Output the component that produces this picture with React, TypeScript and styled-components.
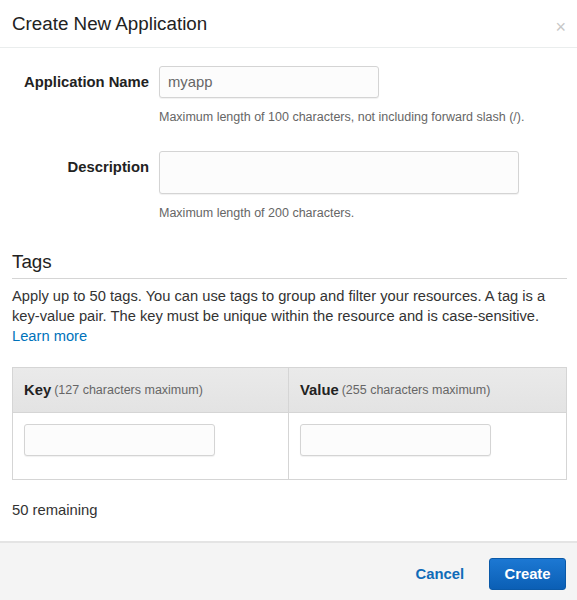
import React from 'react';
import styled, { createGlobalStyle } from 'styled-components';

const GlobalStyle = createGlobalStyle`
    html, body {
        margin: 0;
        padding: 0;
        background: #fff;
    }
    body {
        font-family: 'Liberation Sans', Arial, sans-serif;
        color: #333;
    }
`;

const App: React.FC = () => {
    return (
        <>
            <GlobalStyle />
            <Modal>
                <Header>
                    <Title>Create New Application</Title>
                    <Close aria-label="close">×</Close>
                </Header>
                <Body>
                    <FieldRow>
                        <Label>Application Name</Label>
                        <FieldControl>
                            <TextInput defaultValue="myapp" width={220} />
                            <Hint>
                                Maximum length of 100 characters, not including forward slash (/).
                            </Hint>
                        </FieldControl>
                    </FieldRow>
                    <FieldRow $top={27}>
                        <Label>Description</Label>
                        <FieldControl>
                            <TextArea />
                            <Hint>Maximum length of 200 characters.</Hint>
                        </FieldControl>
                    </FieldRow>

                    <SectionTitle>Tags</SectionTitle>
                    <Paragraph>
                        Apply up to 50 tags. You can use tags to group and filter your resources. A
                        tag is a key-value pair. The key must be unique within the resource and is
                        case-sensitive.
                        <br />
                        <Link href="#">Learn more</Link>
                    </Paragraph>

                    <TagTable>
                        <HeadCell>
                            <strong>Key</strong> <Small>(127 characters maximum)</Small>
                        </HeadCell>
                        <HeadCell $last>
                            <strong>Value</strong> <Small>(255 characters maximum)</Small>
                        </HeadCell>
                        <BodyCell>
                            <TextInput width={191} />
                        </BodyCell>
                        <BodyCell $last>
                            <TextInput width={191} />
                        </BodyCell>
                    </TagTable>

                    <Remaining>50 remaining</Remaining>
                </Body>
                <Footer>
                    <CancelButton>Cancel</CancelButton>
                    <PrimaryButton>Create</PrimaryButton>
                </Footer>
            </Modal>
        </>
    );
};

const Modal = styled.div`
    width: 577px;
    height: 600px;
    display: flex;
    flex-direction: column;
    background: #fff;
    overflow: hidden;
`;

const Header = styled.div`
    height: 48px;
    display: flex;
    align-items: center;
    justify-content: space-between;
    padding: 0 12px;
    border-bottom: 1px solid #eaeded;
    box-sizing: border-box;
`;

const Title = styled.h2`
    margin: 0;
    font-size: 18.8px;
    font-weight: normal;
    color: #222;
    padding-top: 1px;
`;

const Close = styled.span`
    font-size: 18px;
    color: #c7c7c7;
    margin-top: 7px;
    margin-right: -1px;
`;

const Body = styled.div`
    flex: 1;
    padding: 18px 10px 0 12px;
`;

const FieldRow = styled.div<{ $top?: number }>`
    display: grid;
    grid-template-columns: 137px 1fr;
    column-gap: 10px;
    margin-top: ${p => p.$top || 0}px;
`;

const Label = styled.label`
    font-size: 14.8px;
    font-weight: bold;
    text-align: right;
    color: #222;
    padding-top: 8px;
`;

const FieldControl = styled.div`
    display: flex;
    flex-direction: column;
`;

const TextInput = styled.input<{ width: number }>`
    width: ${p => p.width}px;
    height: 32px;
    box-sizing: border-box;
    border: 1px solid #d4d4d4;
    border-radius: 3px;
    background: #fcfcfc;
    box-shadow: 0 1px 1px rgba(0, 0, 0, 0.06);
    padding: 0 8px;
    font-family: 'Liberation Sans', Arial, sans-serif;
    font-size: 14.8px;
    color: #666;
    outline: none;
`;

const TextArea = styled.div`
    width: 360px;
    height: 43px;
    box-sizing: border-box;
    border: 1px solid #d4d4d4;
    border-radius: 3px;
    background: #fcfcfc;
    box-shadow: 0 1px 1px rgba(0, 0, 0, 0.06);
`;

const Hint = styled.div`
    font-size: 12.5px;
    color: #666;
    margin-top: 12px;
`;

const SectionTitle = styled.h3`
    margin: 31px 0 0;
    font-size: 18.8px;
    font-weight: normal;
    color: #222;
    padding-bottom: 5px;
    border-bottom: 1px solid #d5d5d5;
`;

const Paragraph = styled.p`
    margin: 7px 0 0;
    font-size: 14.7px;
    line-height: 20px;
    color: #333;
`;

const Link = styled.a`
    color: #0073bb;
    text-decoration: none;
`;

const TagTable = styled.div`
    margin-top: 21px;
    display: grid;
    grid-template-columns: 276px 1fr;
    grid-template-rows: 45px 66px;
    border: 1px solid #d5d5d5;
`;

const HeadCell = styled.div<{ $last?: boolean }>`
    background: linear-gradient(#eaeaea, #e3e3e3);
    border-bottom: 1px solid #d5d5d5;
    border-right: ${p => (p.$last ? 'none' : '1px solid #d5d5d5')};
    display: flex;
    align-items: center;
    padding: 0 11px;
    font-size: 14.8px;
    color: #222;
    white-space: nowrap;
`;

const Small = styled.span`
    font-size: 12.5px;
    color: #666;
    margin-left: 3px;
`;

const BodyCell = styled.div<{ $last?: boolean }>`
    border-right: ${p => (p.$last ? 'none' : '1px solid #d5d5d5')};
    padding: 11px 11px 0;
`;

const Remaining = styled.div`
    margin-top: 22px;
    font-size: 14.8px;
    color: #333;
`;

const Footer = styled.div`
    height: 57px;
    border-top: 2px solid #e4e4e4;
    background: #f4f4f4;
    display: flex;
    align-items: center;
    justify-content: flex-end;
    padding: 0 11px 0 0;
    gap: 25px;
`;

const CancelButton = styled.button`
    background: none;
    border: none;
    font-family: 'Liberation Sans', Arial, sans-serif;
    font-size: 14.8px;
    font-weight: bold;
    color: #0f6bb8;
    padding: 0;
    margin-top: 4px;
`;

const PrimaryButton = styled.button`
    width: 77px;
    height: 32px;
    margin-top: 4px;
    border: 1px solid #0a59a8;
    border-radius: 3px;
    background: linear-gradient(#1c78d3, #0b5fb5);
    color: #fff;
    font-family: 'Liberation Sans', Arial, sans-serif;
    font-size: 14.8px;
    font-weight: bold;
`;

export default App;
